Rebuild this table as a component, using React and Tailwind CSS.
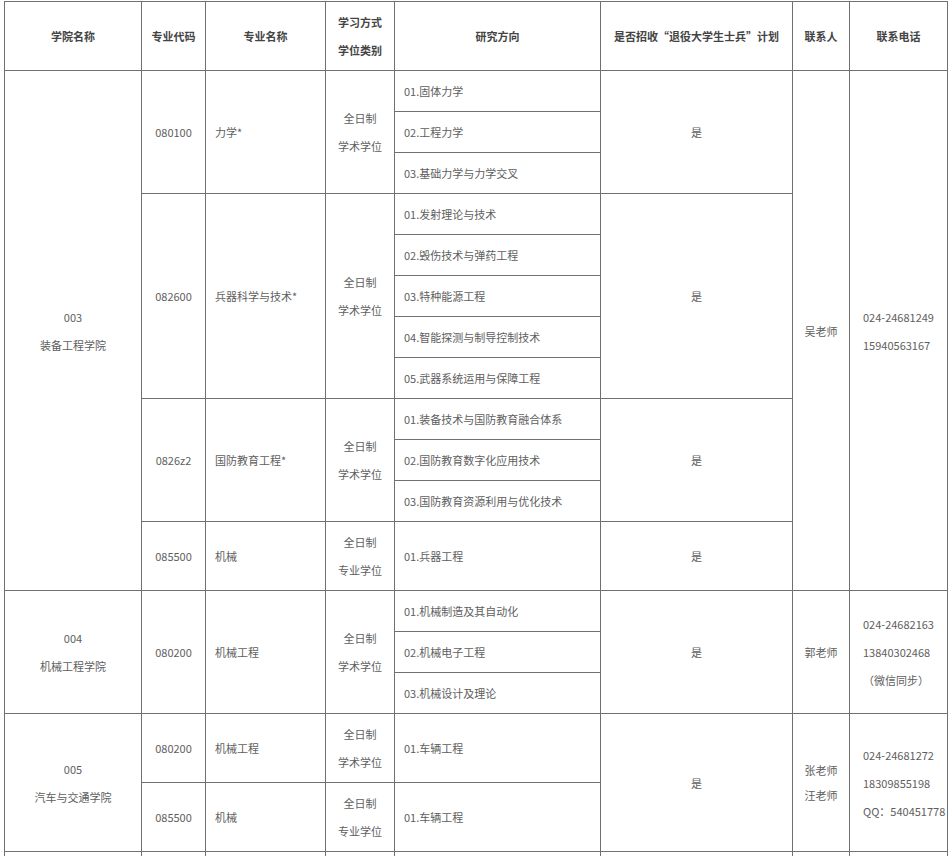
const font = { fontFamily: '"Noto Sans CJK SC", "Liberation Sans", sans-serif' };

const cell = 'border border-[#707070] align-middle py-[6px] leading-[28px]';

function Th({ children, className = '' }) {
  return <th className={`${cell} px-1 font-bold text-[#444] text-center whitespace-nowrap ${className}`}>{children}</th>;
}

function Td({ children, className = '', rowSpan, left }) {
  return (
    <td
      rowSpan={rowSpan}
      className={`${cell} ${left ? 'text-left pl-[9px] pr-1' : 'text-center px-1'} ${className}`}
    >
      {children}
    </td>
  );
}

function Mode({ type = '学术学位' }) {
  return (
    <>
      <div>全日制</div>
      <div>{type}</div>
    </>
  );
}

function Phones({ lines }) {
  return (
    <div className="text-left pl-[13px]">
      {lines.map((l) => (
        <div key={l}>{l}</div>
      ))}
    </div>
  );
}

export default function App() {
  return (
    <div className="bg-white min-h-screen pl-[4px] pt-[1px]" style={font}>
      <table className="table-fixed border-collapse w-[943px] text-[11px] text-[#5e5e5e]">
        <colgroup>
          <col className="w-[137px]" />
          <col className="w-[64px]" />
          <col className="w-[120px]" />
          <col className="w-[69px]" />
          <col className="w-[206px]" />
          <col className="w-[192px]" />
          <col className="w-[57px]" />
          <col className="w-[98px]" />
        </colgroup>
        <thead>
          <tr>
            <Th>学院名称</Th>
            <Th>专业代码</Th>
            <Th>专业名称</Th>
            <Th>
              <div>学习方式</div>
              <div>学位类别</div>
            </Th>
            <Th>研究方向</Th>
            <Th>是否招收“退役大学生士兵”计划</Th>
            <Th>联系人</Th>
            <Th>联系电话</Th>
          </tr>
        </thead>
        <tbody>
          <tr>
            <Td rowSpan={12}>
              <div>003</div>
              <div>装备工程学院</div>
            </Td>
            <Td rowSpan={3}>080100</Td>
            <Td rowSpan={3} left>力学*</Td>
            <Td rowSpan={3}><Mode /></Td>
            <Td left>01.固体力学</Td>
            <Td rowSpan={3}>是</Td>
            <Td rowSpan={12}>吴老师</Td>
            <Td rowSpan={12} className="!px-0">
              <Phones lines={['024-24681249', '15940563167']} />
            </Td>
          </tr>
          <tr><Td left>02.工程力学</Td></tr>
          <tr><Td left>03.基础力学与力学交叉</Td></tr>

          <tr>
            <Td rowSpan={5}>082600</Td>
            <Td rowSpan={5} left>兵器科学与技术*</Td>
            <Td rowSpan={5}><Mode /></Td>
            <Td left>01.发射理论与技术</Td>
            <Td rowSpan={5}>是</Td>
          </tr>
          <tr><Td left>02.毁伤技术与弹药工程</Td></tr>
          <tr><Td left>03.特种能源工程</Td></tr>
          <tr><Td left>04.智能探测与制导控制技术</Td></tr>
          <tr><Td left>05.武器系统运用与保障工程</Td></tr>

          <tr>
            <Td rowSpan={3}>0826z2</Td>
            <Td rowSpan={3} left>国防教育工程*</Td>
            <Td rowSpan={3}><Mode /></Td>
            <Td left>01.装备技术与国防教育融合体系</Td>
            <Td rowSpan={3}>是</Td>
          </tr>
          <tr><Td left>02.国防教育数字化应用技术</Td></tr>
          <tr><Td left>03.国防教育资源利用与优化技术</Td></tr>

          <tr>
            <Td>085500</Td>
            <Td left>机械</Td>
            <Td><Mode type="专业学位" /></Td>
            <Td left>01.兵器工程</Td>
            <Td>是</Td>
          </tr>

          <tr>
            <Td rowSpan={3}>
              <div>004</div>
              <div>机械工程学院</div>
            </Td>
            <Td rowSpan={3}>080200</Td>
            <Td rowSpan={3} left>机械工程</Td>
            <Td rowSpan={3}><Mode /></Td>
            <Td left>01.机械制造及其自动化</Td>
            <Td rowSpan={3}>是</Td>
            <Td rowSpan={3}>郭老师</Td>
            <Td rowSpan={3} className="!px-0">
              <Phones lines={['024-24682163', '13840302468', '（微信同步）']} />
            </Td>
          </tr>
          <tr><Td left>02.机械电子工程</Td></tr>
          <tr><Td left>03.机械设计及理论</Td></tr>

          <tr>
            <Td rowSpan={2}>
              <div>005</div>
              <div>汽车与交通学院</div>
            </Td>
            <Td>080200</Td>
            <Td left>机械工程</Td>
            <Td><Mode /></Td>
            <Td left>01.车辆工程</Td>
            <Td rowSpan={2}>是</Td>
            <Td rowSpan={2}>
              <div className="leading-[25px]">张老师</div>
              <div className="leading-[25px]">汪老师</div>
            </Td>
            <Td rowSpan={2} className="!px-0">
              <Phones lines={['024-24681272', '18309855198', 'QQ：540451778']} />
            </Td>
          </tr>
          <tr>
            <Td>085500</Td>
            <Td left>机械</Td>
            <Td><Mode type="专业学位" /></Td>
            <Td left>01.车辆工程</Td>
          </tr>

          <tr>
            <Td>&nbsp;</Td>
            <Td>&nbsp;</Td>
            <Td left>&nbsp;</Td>
            <Td>&nbsp;</Td>
            <Td left>&nbsp;</Td>
            <Td>&nbsp;</Td>
            <Td>&nbsp;</Td>
            <Td>&nbsp;</Td>
          </tr>
        </tbody>
      </table>
    </div>
  );
}
